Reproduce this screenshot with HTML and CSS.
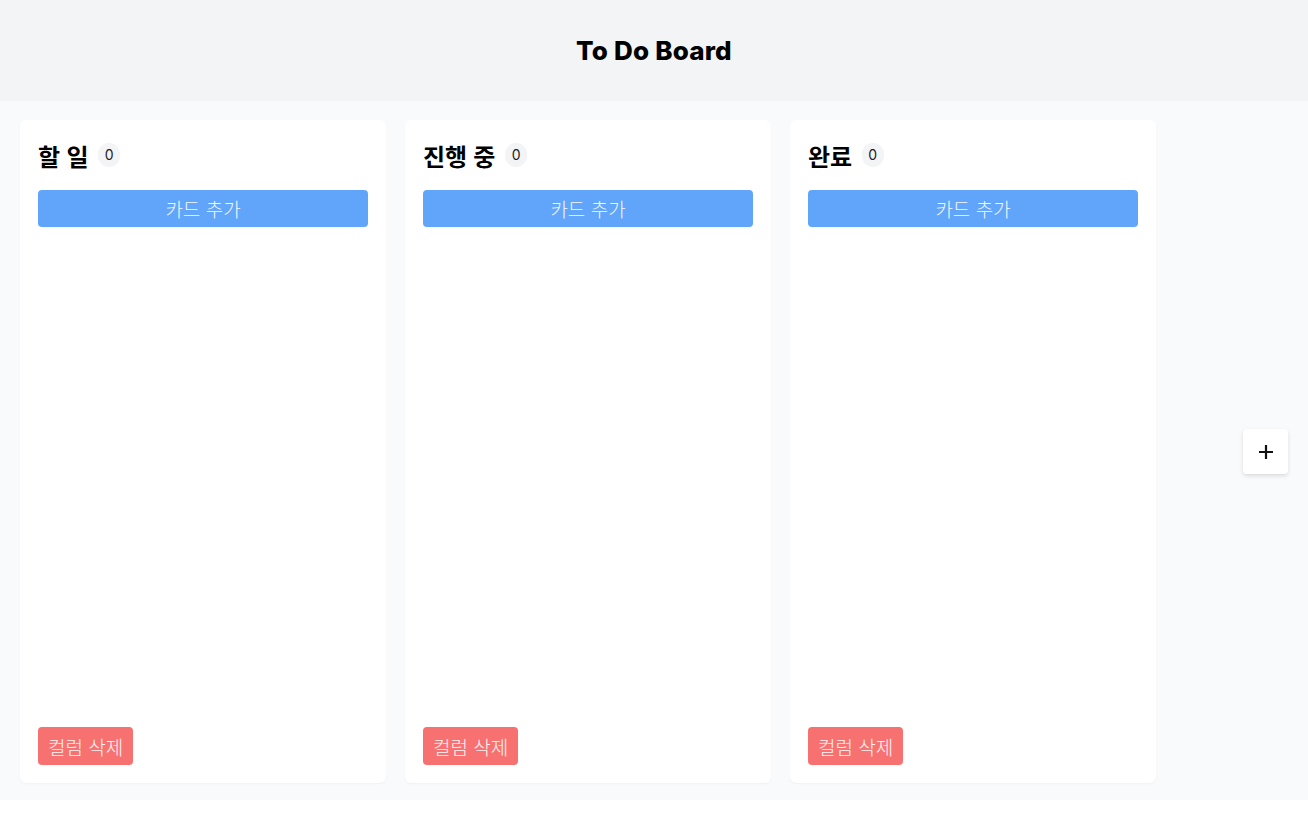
FILE: index.html
```html
<!DOCTYPE html>
<html lang="ko">
<head>
<meta charset="utf-8">
<title>To Do Board</title>
<link rel="stylesheet" href="styles.css">
</head>
<body>
<header class="app-header">
  <h1 class="app-title">To Do Board</h1>
</header>
<main class="board">
  <div class="columns">
    <section class="column">
      <div class="column-head">
        <h2 class="column-title">할 일</h2>
        <span class="count">0</span>
      </div>
      <button class="add-card">카드 추가</button>
      <div class="cards"></div>
      <div class="column-foot"><button class="delete-col">컬럼 삭제</button></div>
    </section>
    <section class="column">
      <div class="column-head">
        <h2 class="column-title">진행 중</h2>
        <span class="count">0</span>
      </div>
      <button class="add-card">카드 추가</button>
      <div class="cards"></div>
      <div class="column-foot"><button class="delete-col">컬럼 삭제</button></div>
    </section>
    <section class="column">
      <div class="column-head">
        <h2 class="column-title">완료</h2>
        <span class="count">0</span>
      </div>
      <button class="add-card">카드 추가</button>
      <div class="cards"></div>
      <div class="column-foot"><button class="delete-col">컬럼 삭제</button></div>
    </section>
  </div>
  <button class="add-column" aria-label="컬럼 추가">
    <svg width="18" height="18" viewBox="0 0 18 18"><path d="M9 2v14M2 9h14" stroke="#111" stroke-width="2.2" fill="none"/></svg>
  </button>
</main>
</body>
</html>
```

FILE: styles.css
```css
* { box-sizing: border-box; }
html, body { margin: 0; padding: 0; background: #fff; }
body {
  font-family: Inter, "Noto Sans CJK KR", "Noto Sans", sans-serif;
  color: #111;
}
.app-header {
  height: 101px;
  background: #f3f4f6;
  display: flex;
  align-items: center;
  justify-content: center;
}
.app-title {
  margin: 0;
  font-size: 26px;
  font-weight: 800;
  letter-spacing: 0.2px;
  color: #000;
}
.board {
  background: #f9fafb;
  height: 699px;
  padding: 19px 20px 17px 20px;
  display: flex;
  align-items: stretch;
}
.columns {
  display: flex;
  gap: 19px;
}
.column {
  width: 366px;
  background: #fff;
  border-radius: 6px;
  box-shadow: 0 1px 2px rgba(0,0,0,0.04);
  padding: 18px;
  display: flex;
  flex-direction: column;
}
.column-head {
  display: flex;
  align-items: center;
  gap: 10px;
  height: 34px;
  margin-bottom: 18px;
}
.column-title {
  margin: 0;
  font-family: "Noto Sans CJK KR", sans-serif;
  font-size: 24px;
  font-weight: 700;
  color: #000;
  letter-spacing: -0.2px;
}
.count {
  background: #f3f4f6;
  border-radius: 999px;
  font-family: Inter, sans-serif;
  font-size: 14px;
  line-height: 22px;
  min-width: 22px;
  padding: 1px 6px;
  text-align: center;
  color: #222;
}
.add-card {
  height: 37px;
  border: none;
  border-radius: 4px;
  background: #60a5fa;
  color: #f4f8ff;
  font-family: "Noto Sans CJK KR", sans-serif;
  font-size: 19px;
  font-weight: 300;
  cursor: pointer;
}
.cards { flex: 1; }
.column-foot { display: flex; }
.delete-col {
  height: 38px;
  padding: 0 10px;
  border: none;
  border-radius: 4px;
  background: #f87171;
  color: #fff4f4;
  font-family: "Noto Sans CJK KR", sans-serif;
  font-size: 19px;
  font-weight: 300;
  cursor: pointer;
}
.add-column {
  margin-left: auto;
  align-self: center;
  width: 45px;
  height: 45px;
  border: none;
  border-radius: 4px;
  background: #fff;
  box-shadow: 0 2px 4px rgba(0,0,0,0.12);
  display: flex;
  align-items: center;
  justify-content: center;
  padding: 0;
  cursor: pointer;
}
```
